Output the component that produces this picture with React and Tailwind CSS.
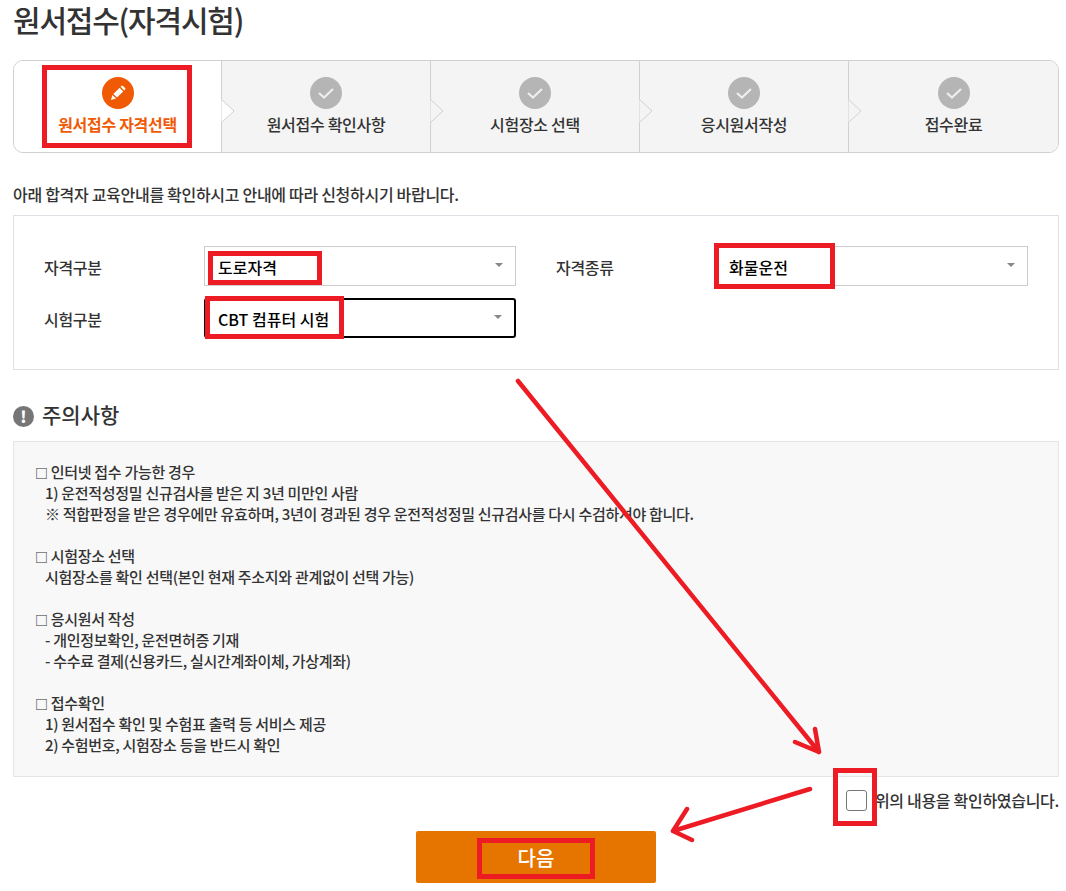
import React from 'react';

const steps = ['원서접수 확인사항', '시험장소 선택', '응시원서작성', '접수완료'];

const notes = [
  ['인터넷 접수 가능한 경우', '1) 운전적성정밀 신규검사를 받은 지 3년 미만인 사람', '※ 적합판정을 받은 경우에만 유효하며, 3년이 경과된 경우 운전적성정밀 신규검사를 다시 수검하셔야 합니다.'],
  ['시험장소 선택', '시험장소를 확인 선택(본인 현재 주소지와 관계없이 선택 가능)'],
  ['응시원서 작성', '- 개인정보확인, 운전면허증 기재', '- 수수료 결제(신용카드, 실시간계좌이체, 가상계좌)'],
  ['접수확인', '1) 원서접수 확인 및 수험표 출력 등 서비스 제공', '2) 수험번호, 시험장소 등을 반드시 확인'],
];

function Select({ value, className }) {
  return (
    <div className={`flex h-10 items-center justify-between bg-white pr-3 text-[16px] font-medium tracking-normal text-black ${className}`}>
      <span className="pt-0.5">{value}</span>
      <svg width="8" height="4" viewBox="0 0 8 4" className="mb-[2px]"><path d="M0 0h8L4 4z" fill="#888888" /></svg>
    </div>
  );
}

function RedBox({ className }) {
  return <div className={`pointer-events-none absolute border-[5px] border-[#ed1c24] ${className}`} />;
}

export default function App() {
  return (
    <div className="relative h-[891px] w-[1066px] overflow-hidden bg-white pl-[13px] pr-[7px] text-[#333333]" style={{ fontFamily: '"Noto Sans CJK KR", "Noto Sans", sans-serif' }}>
      <h1 className="flex h-[39px] items-center text-[30px] font-medium tracking-[-1.2px] text-[#333333]">원서접수(자격시험)</h1>

      <div className="mt-[21px] flex h-[93px] w-[1046px] overflow-hidden rounded-[10px] border border-[#d0d0d0]">
        <div className="flex w-[207px] shrink-0 flex-col items-center bg-white pt-4">
          <div className="flex h-8 w-8 items-center justify-center rounded-full bg-[#f05a05]">
            <svg width="18" height="18" viewBox="0 0 18 18" fill="#ffffff">
              <path d="M2 16l1.4-5 3.6 3.6z" />
              <path d="M4.4 10L10.6 3.8 14.2 7.4 8 13.6z" />
              <path d="M11.6 2.8l.9-.9a1 1 0 0 1 1.4 0l2.2 2.2a1 1 0 0 1 0 1.4l-.9.9z" />
            </svg>
          </div>
          <div className="mt-1 text-[16px] font-bold leading-[22px] tracking-[-0.3px] text-[#f05a05]">원서접수 자격선택</div>
        </div>
        {steps.map((label, i) => (
          <div key={label} className={`relative flex flex-col items-center border-l border-[#d0d0d0] bg-[#f4f4f4] pt-4 ${i === 3 ? 'flex-1' : 'w-[209px] shrink-0'}`}>
            <svg width="14" height="24" viewBox="0 0 14 24" className="absolute left-[-1px] top-[38px]">
              <path d="M0.5 0.5L13 12 0.5 23.5" fill={i === 0 ? '#ffffff' : '#f4f4f4'} stroke="#d0d0d0" />
            </svg>
            <div className="flex h-8 w-8 items-center justify-center rounded-full bg-[#b5b5b5]">
              <svg width="16" height="11" viewBox="0 0 16 11" fill="none"><path d="M1 5l5 4.5L15 1" stroke="#eeeeee" strokeWidth="2.2" /></svg>
            </div>
            <div className="mt-1 text-[16px] font-medium leading-[22px] tracking-[-0.3px] text-[#333333]">{label}</div>
          </div>
        ))}
      </div>

      <p className="mt-[30px] text-[16px] font-medium leading-[22px] tracking-[-0.3px] text-[#333333]">아래 합격자 교육안내를 확인하시고 안내에 따라 신청하시기 바랍니다.</p>

      <div className="mt-[10px] grid h-[155px] w-[1046px] grid-cols-[160px_312px_40px_160px_312px] content-start gap-y-3 border border-[#dde1e6] pl-[30px] pt-[30px] text-[16px] font-medium tracking-[-0.3px]">
        <div className="flex h-10 items-center pt-0.5">자격구분</div>
        <Select value="도로자격" className="border border-[#cccccc] pl-[13px]" />
        <div />
        <div className="flex h-10 items-center pt-0.5">자격종류</div>
        <Select value="화물운전" className="border border-[#cccccc] pl-[12px]" />
        <div className="flex h-10 items-center pt-0.5">시험구분</div>
        <Select value="CBT 컴퓨터 시험" className="rounded-[3px] border-2 border-black pl-3" />
      </div>

      <div className="mt-[32px] flex h-[28px] items-center gap-2">
        <div className="flex h-[21px] w-[21px] items-center justify-center rounded-full bg-[#767676] text-[16px] font-black text-white">!</div>
        <h2 className="pb-0.5 text-[21px] font-medium text-[#333333]">주의사항</h2>
      </div>

      <div className="mt-[11px] flex h-[336px] w-[1046px] flex-col gap-[21px] border border-[#e5e5e5] bg-[#f8f8f8] pl-[21px] pt-[19px] text-[15px] font-medium leading-[21px] tracking-[-0.3px]">
        {notes.map(([title, ...lines]) => (
          <div key={title}>
            <div className="h-[21px]"><span className="text-[13px] leading-none">□</span> {title}</div>
            {lines.map((line) => (
              <div key={line} className="pl-[10px]">{line}</div>
            ))}
          </div>
        ))}
      </div>

      <div className="mt-[13px] flex h-[21px] w-[1046px] items-center justify-end gap-2 text-[16px] font-medium tracking-[-0.3px]">
        <span className="h-[21px] w-[21px] rounded-[3px] border border-[#767676] bg-white" />
        <span className="pb-0.5">위의 내용을 확인하였습니다.</span>
      </div>

      <div className="mt-5 flex justify-center">
        <button className="h-[52px] w-[240px] rounded-[2px] bg-[#e67500] pt-px text-[20px] font-medium text-white">다음</button>
      </div>

      <RedBox className="left-[42px] top-[65px] h-[83px] w-[150px]" />
      <RedBox className="left-[208px] top-[251px] h-[34px] w-[114px]" />
      <RedBox className="left-[205px] top-[296px] h-[43px] w-[139px]" />
      <RedBox className="left-[714px] top-[243px] h-[46px] w-[121px]" />
      <RedBox className="left-[833px] top-[768px] h-[58px] w-[44px]" />
      <RedBox className="left-[477px] top-[838px] h-[41px] w-[118px]" />

      <svg className="pointer-events-none absolute left-0 top-0" width="1066" height="891" fill="none" stroke="#ed1c24" strokeWidth="4.5" strokeLinecap="round">
        <path d="M518 381L819 752M819 752L795 742M819 752L815 729" />
        <path d="M810 789L673 831M673 831L687 809M673 831L692 840" />
      </svg>
    </div>
  );
}
